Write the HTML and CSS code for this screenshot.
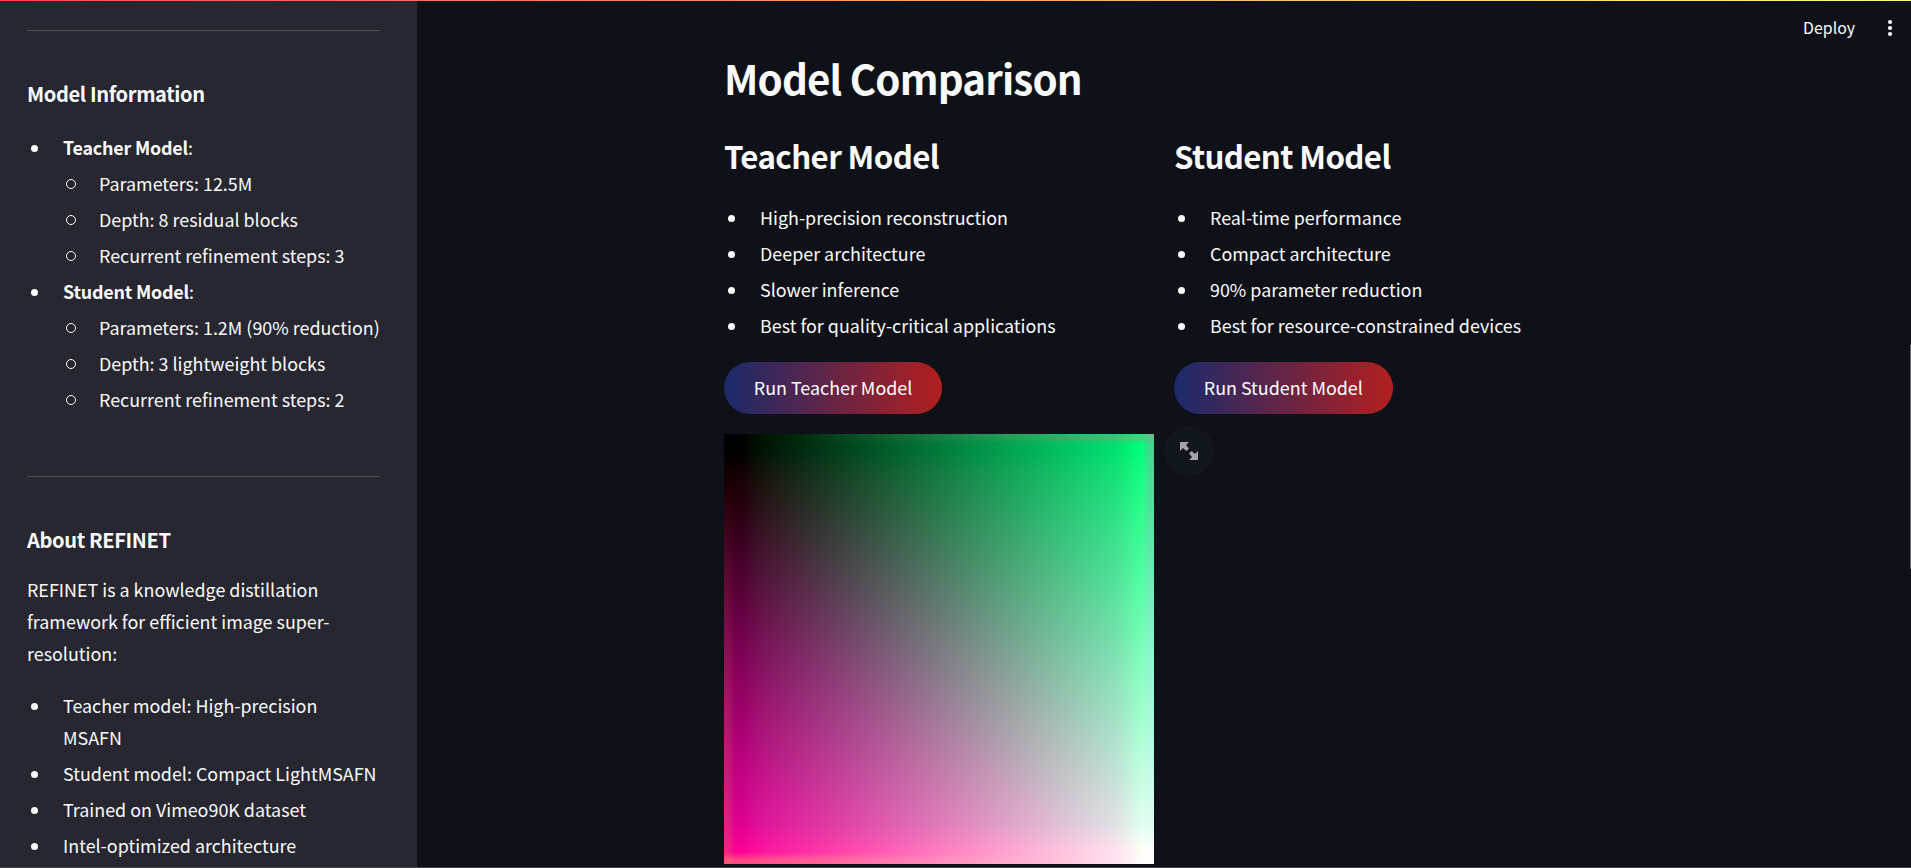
FILE: index.html
```html
<!DOCTYPE html>
<html lang="en">
<head>
<meta charset="utf-8">
<title>REFINET</title>
<link rel="stylesheet" href="styles.css">
</head>
<body>
<div class="app">
  <aside class="sidebar">
    <hr class="rule">
    <h3 class="side-heading">Model Information</h3>
    <ul class="list model-list">
      <li><strong>Teacher Model</strong>:
        <ul class="list sublist">
          <li>Parameters: 12.5M</li>
          <li>Depth: 8 residual blocks</li>
          <li>Recurrent refinement steps: 3</li>
        </ul>
      </li>
      <li><strong>Student Model</strong>:
        <ul class="list sublist">
          <li>Parameters: 1.2M (90% reduction)</li>
          <li>Depth: 3 lightweight blocks</li>
          <li>Recurrent refinement steps: 2</li>
        </ul>
      </li>
    </ul>
    <hr class="rule">
    <h3 class="side-heading about-heading">About REFINET</h3>
    <p class="about">REFINET is a knowledge distillation framework for efficient image super-resolution:</p>
    <ul class="list">
      <li>Teacher model: High-precision<br>MSAFN</li>
      <li>Student model: Compact LightMSAFN</li>
      <li>Trained on Vimeo90K dataset</li>
      <li>Intel-optimized architecture</li>
    </ul>
  </aside>
  <main class="main">
    <h1 class="title">Model Comparison</h1>
    <div class="columns">
      <section class="column">
        <h2 class="subtitle">Teacher Model</h2>
        <ul class="list">
          <li>High-precision reconstruction</li>
          <li>Deeper architecture</li>
          <li>Slower inference</li>
          <li>Best for quality-critical applications</li>
        </ul>
        <button class="run">Run Teacher Model</button>
        <div class="result"></div>
      </section>
      <section class="column">
        <h2 class="subtitle">Student Model</h2>
        <ul class="list">
          <li>Real-time performance</li>
          <li>Compact architecture</li>
          <li>90% parameter reduction</li>
          <li>Best for resource-constrained devices</li>
        </ul>
        <button class="run">Run Student Model</button>
        <button class="expand" aria-label="View fullscreen">
          <svg width="18" height="18" viewBox="0 0 18 18"><path d="M0 0H9L6 3 9 6.4 6.4 9 3 6 0 9ZM18 18H9L12 15 9 11.6 11.6 9 15 12 18 9Z"/></svg>
        </button>
      </section>
    </div>
  </main>
</div>
<header class="toolbar">
  <span class="deploy">Deploy</span>
  <svg class="menu" width="6" height="18" viewBox="0 0 6 18"><circle cx="3" cy="3" r="2.1"/><circle cx="3" cy="9" r="2.1"/><circle cx="3" cy="15" r="2.1"/></svg>
</header>
<div class="decoration"></div>
<div class="scroll-thumb"></div>
<div class="bottom-edge"></div>
</body>
</html>
```
FILE: styles.css
```css
* { box-sizing: border-box; }
body {
  margin: 0;
  height: 868px;
  overflow: hidden;
  background: #0e1117;
  color: #fafafa;
  font: 17.9px/32px "Noto Sans CJK SC", "Noto Sans", sans-serif;
}
h1, h2, h3, p, ul { margin: 0; padding: 0; }
.app { display: flex; height: 868px; }

.sidebar {
  width: 417px;
  flex: none;
  padding: 30px 37px 0 27px;
  background: #262730;
  overflow: hidden;
}
.rule { height: 1px; margin: 0; border: 0; background: #4c4d55; }
.side-heading {
  font-size: 20.1px;
  font-weight: 600;
  line-height: 28px;
  letter-spacing: -0.38px;
  margin: 49px 0 23px;
}
.about-heading { margin-bottom: 19px; }
.model-list { margin-bottom: 61px; }
.about { margin-bottom: 20px; }

.list { list-style: none; }
.list li { padding-left: 36px; margin-bottom: 4px; white-space: nowrap; }
.list li::before {
  content: "";
  display: inline-block;
  width: 7px;
  height: 7px;
  margin: 0 25px 0 -32px;
  border-radius: 50%;
  background: #fafafa;
  vertical-align: 3px;
}
.list .sublist { margin-top: 4px; }
.list .sublist li::before {
  width: 8px;
  height: 8px;
  margin: 0 23px 0 -33px;
  border: 1px solid #fafafa;
  background: none;
  vertical-align: 2px;
}
.sidebar strong { font-weight: 600; letter-spacing: -0.2px; }

.main { padding: 46px 0 0 307px; }
.title { font-size: 40.3px; font-weight: 600; line-height: 64px; letter-spacing: -0.85px; }
.columns { display: grid; grid-template-columns: 430px 430px; gap: 20px; margin-top: 25px; }
.subtitle {
  font-size: 31.3px;
  font-weight: 600;
  line-height: 42px;
  letter-spacing: -0.63px;
  margin-bottom: 24px;
}
.run {
  display: block;
  height: 52px;
  margin-top: 21px;
  padding: 0 29.8px 2px;
  border: 0;
  border-radius: 26px;
  background: linear-gradient(90deg, #1a2a6c, #b21f1f);
  color: #fff;
  font: inherit;
}

/* Model output: green grows to the right, red downwards, blue diagonally. */
.result {
  position: relative;
  height: 430px;
  margin-top: 20px;
  background:
    linear-gradient(90deg, #000 4%, #001400 9%, #00e100 91%, #0f0 97%),
    linear-gradient(#000 4%, #140000 9%, #e10000 91%, #f00 97%),
    radial-gradient(circle at 10% 90%, #000040, #000 60%),
    linear-gradient(135deg, #000 5%, #00f);
  background-blend-mode: screen;
}
/* Soft borders left by the convolution padding. */
.result::before,
.result::after { content: ""; position: absolute; inset: 0; }
.result::before {
  background:
    linear-gradient(rgba(200, 100, 100, 0) 12%, rgba(215, 105, 100, .35)) 0 0 / 50% 100% no-repeat,
    linear-gradient(rgba(130, 170, 160, .5), rgba(180, 220, 255, .3) 50%, rgba(255, 255, 255, .1)) 100% 0 / 50% 100% no-repeat;
  mask-image: linear-gradient(90deg, #000 4px, transparent 11px 418px, #000 426px);
}
.result::after {
  background:
    linear-gradient(90deg, rgba(120, 120, 120, 0) 15%, rgba(150, 150, 140, .35)) 0 0 / 100% 50% no-repeat,
    linear-gradient(90deg, rgba(255, 130, 110, .55), rgba(255, 170, 180, .4) 50%, rgba(255, 255, 255, .2)) 0 100% / 100% 50% no-repeat;
  mask-image: linear-gradient(#000 4px, transparent 11px 418px, #000 426px);
}
.expand {
  display: grid;
  place-items: center;
  width: 50px;
  height: 50px;
  margin: 12px 0 0 -10px;
  padding: 0;
  border: 0;
  border-radius: 50%;
  background: #12171e;
}
.expand svg { fill: #a3a5aa; }

.toolbar {
  position: absolute;
  top: 12px;
  right: 18px;
  display: flex;
  align-items: center;
  gap: 32px;
  font-size: 15.9px;
}
.menu { fill: #fafafa; }
.decoration {
  position: absolute;
  inset: 0 0 auto;
  height: 1px;
  background: linear-gradient(90deg, #ff4b4b, #fffd80);
}
.scroll-thumb { position: absolute; right: 0; top: 345px; width: 1px; height: 224px; background: #6b6c70; }
.bottom-edge { position: absolute; inset: auto 0 0; height: 1px; background: #45464b; }
```
